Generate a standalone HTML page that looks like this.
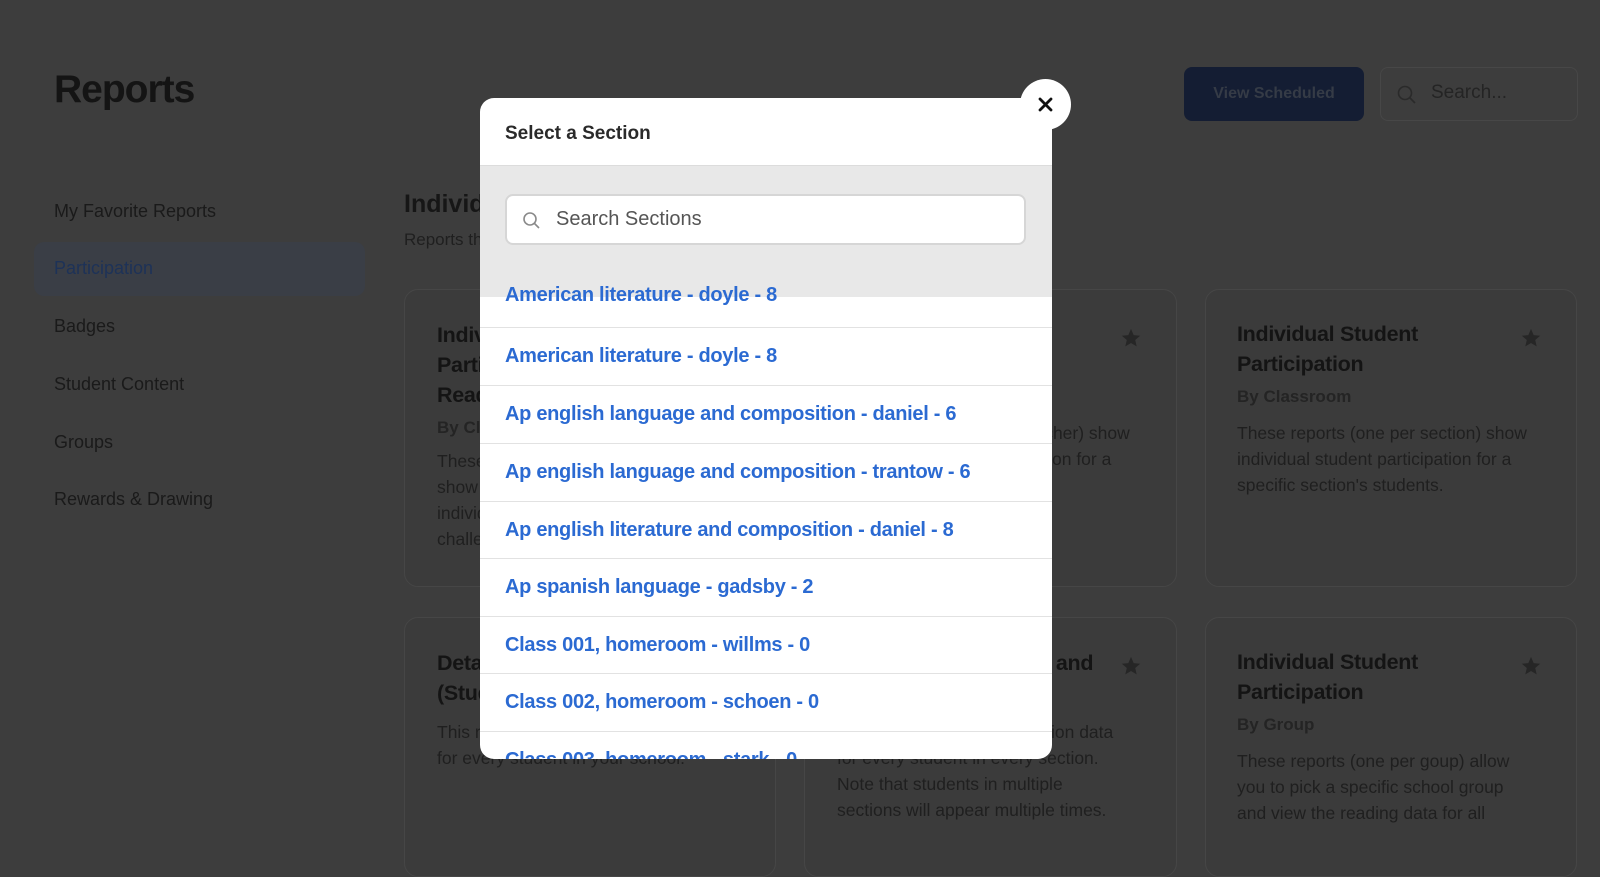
<!DOCTYPE html>
<html><head><meta charset="utf-8"><style>
*{box-sizing:border-box;margin:0;padding:0}
body{width:1600px;height:817px;overflow:hidden;background:#3d3d3d;font-family:"Liberation Sans",sans-serif;position:relative;color:#161616}
.abs{position:absolute}
h1{position:absolute;left:54px;top:68px;font-size:39px;font-weight:bold;letter-spacing:-1px;color:#141414}
.nav{position:absolute;left:54px;font-size:18px;color:#1a1a1a}
.pill{position:absolute;left:34px;top:242px;width:331px;height:54px;border-radius:10px;background:#3a3e46}
.card{position:absolute;border:1.5px solid #464646;border-radius:14px;background:#3b3b3b}
.ct{position:absolute;font-size:21.5px;font-weight:bold;line-height:30px;color:#141414;letter-spacing:-0.3px}
.cs{position:absolute;font-size:17px;font-weight:bold;color:#242424}
.cd{position:absolute;font-size:17.5px;line-height:26px;color:#1f1f1f}
.star{position:absolute;width:22px;height:22px}
.modal{position:absolute;left:480px;top:98px;width:572px;height:661px;background:#fff;border-radius:14px;overflow:hidden}
.mh{position:absolute;left:0;top:0;width:100%;height:68px;border-bottom:1.5px solid #dcdcdc}
.gray{position:absolute;left:0;top:68px;width:100%;height:131px;background:#e8e8e8}
.sb{position:absolute;left:25px;top:28px;width:521px;height:51px;background:#fff;border:2px solid #d6d6d6;border-radius:8px}
.row{position:absolute;left:0;width:100%;height:58px;border-top:1.5px solid #e2e2e2;font-size:20px;font-weight:bold;color:#2b6ad2;padding-left:25px;line-height:56px;letter-spacing:-0.3px;white-space:nowrap}
</style></head><body>
<h1>Reports</h1>
<div class="pill"></div>
<div class="nav" style="top:201px">My Favorite Reports</div>
<div class="nav" style="top:258px;color:#1d3258">Participation</div>
<div class="nav" style="top:316px">Badges</div>
<div class="nav" style="top:374px">Student Content</div>
<div class="nav" style="top:432px">Groups</div>
<div class="nav" style="top:489px">Rewards &amp; Drawing</div>

<div class="abs" style="left:1184px;top:67px;width:180px;height:54px;border-radius:8px;background:#141d33;color:#353b46;font-weight:bold;font-size:16px;text-align:center;line-height:54px">View Scheduled</div>
<div class="abs" style="left:1380px;top:67px;width:198px;height:54px;border-radius:8px;border:1.5px solid #474747"></div>
<svg class="abs" style="left:1396px;top:84px" width="22" height="22" viewBox="0 0 22 22"><circle cx="9" cy="9" r="6.5" fill="none" stroke="#2a2a2a" stroke-width="1.6"/><line x1="14" y1="14" x2="19" y2="19" stroke="#2a2a2a" stroke-width="1.6"/></svg>
<div class="abs" style="left:1431px;top:82px;font-size:19px;color:#242424">Search...</div>

<div class="abs" style="left:404px;top:190px;font-size:25px;font-weight:bold;color:#161616">Individual Student Participation</div>
<div class="abs" style="left:404px;top:230px;font-size:17px;color:#1f1f1f">Reports that show individual student participation</div>

<div class="card" style="left:404px;top:289px;width:372px;height:298px"></div>
<div class="ct" style="left:437px;top:320px">Individual Student<br>Participation Teacher<br>Reading</div>
<div class="cs" style="left:437px;top:418px">By Class</div>
<div class="cd" style="left:437px;top:448px">These reports (one per teacher)<br>show<br>individual student participation<br>challenge</div>

<div class="card" style="left:804px;top:289px;width:373px;height:298px"></div>
<div class="cd" style="left:837px;top:420px">These reports (one per teacher) show<br>individual student participation for a</div>
<svg class="star" style="left:1120px;top:327px" viewBox="0 0 24 24"><path d="M12 2l2.9 6.9 7.1.6-5.4 4.7 1.6 7-6.2-3.8-6.2 3.8 1.6-7L2 9.5l7.1-.6z" fill="#262626"/></svg>

<div class="card" style="left:1205px;top:289px;width:372px;height:298px"></div>
<div class="ct" style="left:1237px;top:319px">Individual Student<br>Participation</div>
<div class="cs" style="left:1237px;top:387px">By Classroom</div>
<div class="cd" style="left:1237px;top:420px">These reports (one per section) show<br>individual student participation for a<br>specific section's students.</div>
<svg class="star" style="left:1520px;top:327px" viewBox="0 0 24 24"><path d="M12 2l2.9 6.9 7.1.6-5.4 4.7 1.6 7-6.2-3.8-6.2 3.8 1.6-7L2 9.5l7.1-.6z" fill="#262626"/></svg>

<div class="card" style="left:404px;top:617px;width:372px;height:260px"></div>
<div class="ct" style="left:437px;top:648px">Detailed Participation<br>(Students)</div>
<div class="cd" style="left:437px;top:719px">This report shows participation data<br>for every student in your school.</div>

<div class="card" style="left:804px;top:617px;width:373px;height:260px"></div>
<div class="ct" style="left:837px;top:648px">Detailed Participation and<br>Reading Information</div>
<div class="cd" style="left:837px;top:719px">This report shows participation data<br>for every student in every section.<br>Note that students in multiple<br>sections will appear multiple times.</div>
<svg class="star" style="left:1120px;top:655px" viewBox="0 0 24 24"><path d="M12 2l2.9 6.9 7.1.6-5.4 4.7 1.6 7-6.2-3.8-6.2 3.8 1.6-7L2 9.5l7.1-.6z" fill="#262626"/></svg>

<div class="card" style="left:1205px;top:617px;width:372px;height:260px"></div>
<div class="ct" style="left:1237px;top:647px">Individual Student<br>Participation</div>
<div class="cs" style="left:1237px;top:715px">By Group</div>
<div class="cd" style="left:1237px;top:748px">These reports (one per goup) allow<br>you to pick a specific school group<br>and view the reading data for all</div>
<svg class="star" style="left:1520px;top:655px" viewBox="0 0 24 24"><path d="M12 2l2.9 6.9 7.1.6-5.4 4.7 1.6 7-6.2-3.8-6.2 3.8 1.6-7L2 9.5l7.1-.6z" fill="#262626"/></svg>

<div class="modal">
 <div class="mh"><div class="abs" style="left:25px;top:25px;font-size:19px;font-weight:bold;color:#2a2a2a">Select a Section</div></div>
 <div class="gray"><div class="sb">
  <svg class="abs" style="left:15px;top:15px" width="20" height="20" viewBox="0 0 20 20"><circle cx="8" cy="8" r="6" fill="none" stroke="#8a8a8a" stroke-width="1.6"/><line x1="12.5" y1="12.5" x2="17" y2="17" stroke="#8a8a8a" stroke-width="1.6"/></svg>
  <div class="abs" style="left:49px;top:12px;font-size:20px;color:#555">Search Sections</div>
 </div></div>
 <div class="row" style="top:169px;border:none">American literature - doyle - 8</div>
 <div class="row" style="top:229px">American literature - doyle - 8</div>
 <div class="row" style="top:287px">Ap english language and composition - daniel - 6</div>
 <div class="row" style="top:345px">Ap english language and composition - trantow - 6</div>
 <div class="row" style="top:403px">Ap english literature and composition - daniel - 8</div>
 <div class="row" style="top:460px">Ap spanish language - gadsby - 2</div>
 <div class="row" style="top:518px">Class 001, homeroom - willms - 0</div>
 <div class="row" style="top:575px">Class 002, homeroom - schoen - 0</div>
 <div class="row" style="top:633px">Class 003, homeroom - stark - 0</div>
</div>
<div class="abs" style="left:1020px;top:79px;width:51px;height:51px;border-radius:50%;background:#fff"></div>
<svg class="abs" style="left:1038px;top:97px" width="15" height="15" viewBox="0 0 15 15"><path d="M2 2L13 13M13 2L2 13" stroke="#111" stroke-width="2.8" stroke-linecap="round"/></svg>
</body></html>
